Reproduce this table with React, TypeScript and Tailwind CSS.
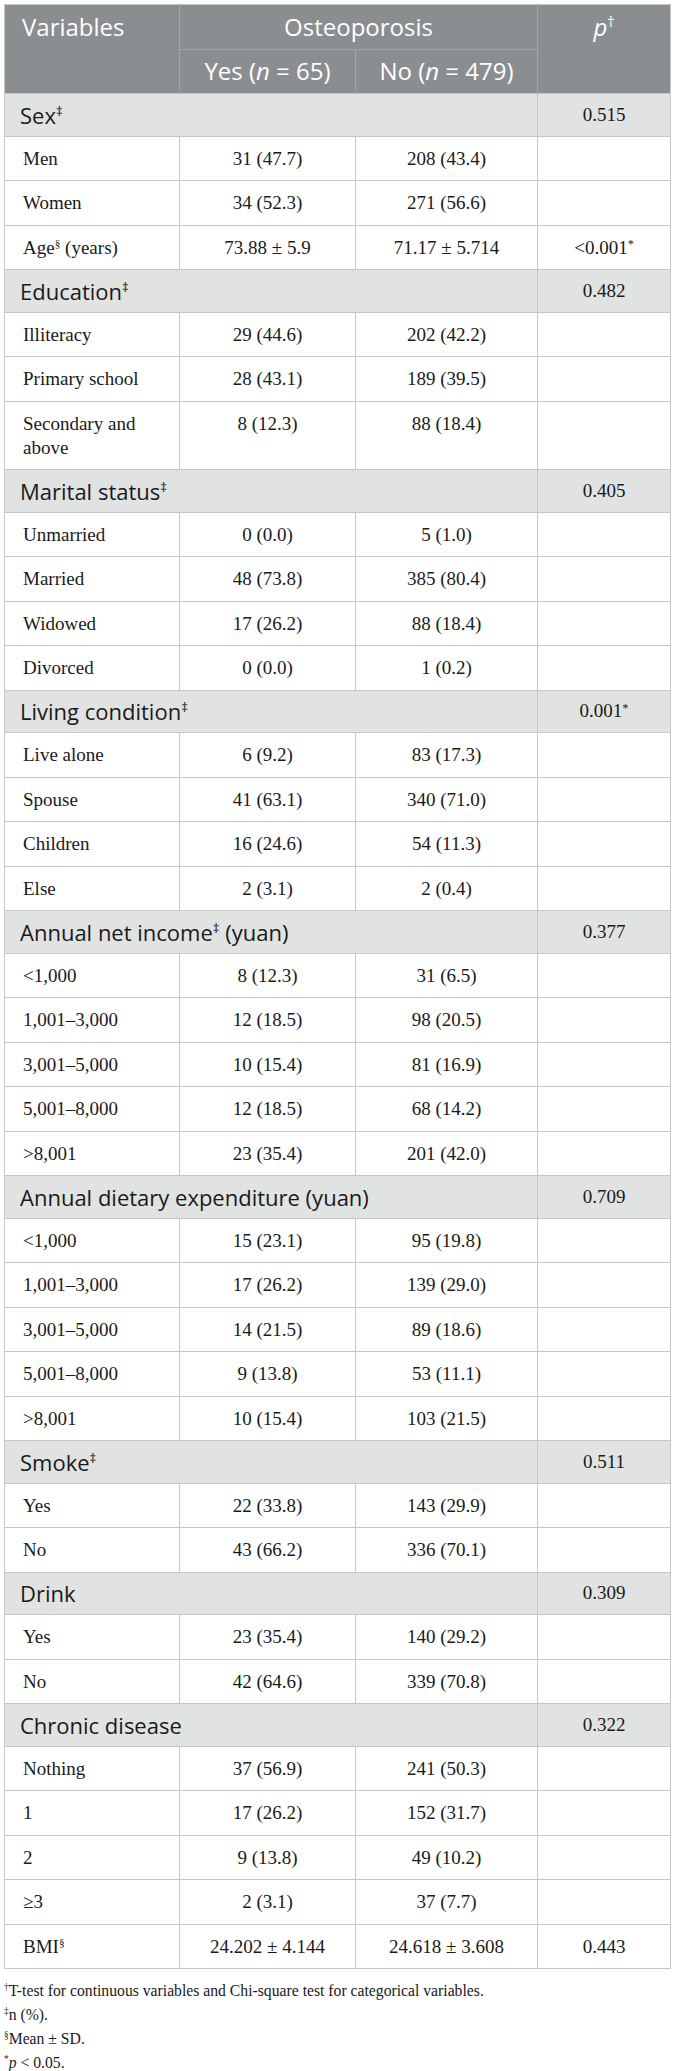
import React from 'react';

type Row =
  | { kind: 'group'; label: React.ReactNode; p: React.ReactNode }
  | { kind: 'data'; label: React.ReactNode; yes: string; no: string; p?: React.ReactNode };

const Sup = ({ children }: { children: React.ReactNode }) => (
  <sup className="text-[0.6em] relative -top-[0.6em] leading-[0] align-baseline">{children}</sup>
);

const Star = () => <sup className="text-[0.65em] relative -top-[0.45em] leading-[0] align-baseline">*</sup>;

const rows: Row[] = [
  { kind: 'group', label: <>Sex<Sup>‡</Sup></>, p: '0.515' },
  { kind: 'data', label: 'Men', yes: '31 (47.7)', no: '208 (43.4)' },
  { kind: 'data', label: 'Women', yes: '34 (52.3)', no: '271 (56.6)' },
  {
    kind: 'data',
    label: <>Age<Sup>§</Sup> (years)</>,
    yes: '73.88 ± 5.9',
    no: '71.17 ± 5.714',
    p: <>&lt;0.001<Star /></>,
  },
  { kind: 'group', label: <>Education<Sup>‡</Sup></>, p: '0.482' },
  { kind: 'data', label: 'Illiteracy', yes: '29 (44.6)', no: '202 (42.2)' },
  { kind: 'data', label: 'Primary school', yes: '28 (43.1)', no: '189 (39.5)' },
  { kind: 'data', label: 'Secondary and above', yes: '8 (12.3)', no: '88 (18.4)' },
  { kind: 'group', label: <>Marital status<Sup>‡</Sup></>, p: '0.405' },
  { kind: 'data', label: 'Unmarried', yes: '0 (0.0)', no: '5 (1.0)' },
  { kind: 'data', label: 'Married', yes: '48 (73.8)', no: '385 (80.4)' },
  { kind: 'data', label: 'Widowed', yes: '17 (26.2)', no: '88 (18.4)' },
  { kind: 'data', label: 'Divorced', yes: '0 (0.0)', no: '1 (0.2)' },
  { kind: 'group', label: <>Living condition<Sup>‡</Sup></>, p: <>0.001<Star /></> },
  { kind: 'data', label: 'Live alone', yes: '6 (9.2)', no: '83 (17.3)' },
  { kind: 'data', label: 'Spouse', yes: '41 (63.1)', no: '340 (71.0)' },
  { kind: 'data', label: 'Children', yes: '16 (24.6)', no: '54 (11.3)' },
  { kind: 'data', label: 'Else', yes: '2 (3.1)', no: '2 (0.4)' },
  { kind: 'group', label: <>Annual net income<Sup>‡</Sup> (yuan)</>, p: '0.377' },
  { kind: 'data', label: '<1,000', yes: '8 (12.3)', no: '31 (6.5)' },
  { kind: 'data', label: '1,001–3,000', yes: '12 (18.5)', no: '98 (20.5)' },
  { kind: 'data', label: '3,001–5,000', yes: '10 (15.4)', no: '81 (16.9)' },
  { kind: 'data', label: '5,001–8,000', yes: '12 (18.5)', no: '68 (14.2)' },
  { kind: 'data', label: '>8,001', yes: '23 (35.4)', no: '201 (42.0)' },
  { kind: 'group', label: 'Annual dietary expenditure (yuan)', p: '0.709' },
  { kind: 'data', label: '<1,000', yes: '15 (23.1)', no: '95 (19.8)' },
  { kind: 'data', label: '1,001–3,000', yes: '17 (26.2)', no: '139 (29.0)' },
  { kind: 'data', label: '3,001–5,000', yes: '14 (21.5)', no: '89 (18.6)' },
  { kind: 'data', label: '5,001–8,000', yes: '9 (13.8)', no: '53 (11.1)' },
  { kind: 'data', label: '>8,001', yes: '10 (15.4)', no: '103 (21.5)' },
  { kind: 'group', label: <>Smoke<Sup>‡</Sup></>, p: '0.511' },
  { kind: 'data', label: 'Yes', yes: '22 (33.8)', no: '143 (29.9)' },
  { kind: 'data', label: 'No', yes: '43 (66.2)', no: '336 (70.1)' },
  { kind: 'group', label: 'Drink', p: '0.309' },
  { kind: 'data', label: 'Yes', yes: '23 (35.4)', no: '140 (29.2)' },
  { kind: 'data', label: 'No', yes: '42 (64.6)', no: '339 (70.8)' },
  { kind: 'group', label: 'Chronic disease', p: '0.322' },
  { kind: 'data', label: 'Nothing', yes: '37 (56.9)', no: '241 (50.3)' },
  { kind: 'data', label: '1', yes: '17 (26.2)', no: '152 (31.7)' },
  { kind: 'data', label: '2', yes: '9 (13.8)', no: '49 (10.2)' },
  { kind: 'data', label: '≥3', yes: '2 (3.1)', no: '37 (7.7)' },
  { kind: 'data', label: <>BMI<Sup>§</Sup></>, yes: '24.202 ± 4.144', no: '24.618 ± 3.608', p: '0.443' },
];

const serif = "font-['Liberation_Serif','Times_New_Roman',serif]";
const sans = "font-['Open_Sans','Noto_Sans',sans-serif]";

export default function App() {
  return (
    <div className="bg-white w-[673px] min-h-[2071px] pt-[4px] pl-[4px] text-[#1a1a1a]">
      <table className="table-fixed border-collapse w-[667px] border border-[#c6c8c8]">
        <colgroup>
          <col className="w-[175px]" />
          <col className="w-[176px]" />
          <col className="w-[182px]" />
          <col />
        </colgroup>
        <thead className={`${sans} text-white bg-[#8b8e90] text-[24px] leading-[30px]`}>
          <tr>
            <th rowSpan={2} className="align-top text-left font-normal pl-[17px] pt-[7px] border-r border-[#a4a7a9]">
              Variables
            </th>
            <th colSpan={2} className="font-normal pt-[7px] pb-[7px] border-b border-[#a4a7a9]">
              Osteoporosis
            </th>
            <th rowSpan={2} className="align-top font-normal pt-[7px] border-l border-[#a4a7a9]">
              <i>p</i>
              <Sup>†</Sup>
            </th>
          </tr>
          <tr>
            <th className="font-normal pt-[6px] pb-[7px] border-r border-[#a4a7a9]">
              Yes (<i>n</i> = 65)
            </th>
            <th className="font-normal pt-[6px] pb-[7px]">
              No (<i>n</i> = 479)
            </th>
          </tr>
        </thead>
        <tbody>
          {rows.map((r, i) =>
            r.kind === 'group' ? (
              <tr key={i} className="bg-[#e1e2e2]">
                <td colSpan={3} className={`${sans} text-[22px] leading-[26px] pl-[15px] py-[7.75px] border border-[#c6c8c8]`}>
                  {r.label}
                </td>
                <td className={`${serif} text-[19px] leading-[26px] text-center py-[7.75px] border border-[#c6c8c8]`}>
                  {r.p}
                </td>
              </tr>
            ) : (
              <tr key={i} className={`${serif} text-[19px] leading-[24px]`}>
                <td className="align-top pl-[18px] pr-[18px] pt-[10px] pb-[9.5px] border border-[#c6c8c8]">{r.label}</td>
                <td className="align-top text-center pt-[10px] pb-[9.5px] border border-[#c6c8c8]">{r.yes}</td>
                <td className="align-top text-center pt-[10px] pb-[9.5px] border border-[#c6c8c8]">{r.no}</td>
                <td className="align-top text-center pt-[10px] pb-[9.5px] border border-[#c6c8c8]">{r.p}</td>
              </tr>
            )
          )}
        </tbody>
      </table>
      <div className={`${serif} text-[15.7px] leading-[24px] mt-[10px]`}>
        <p>
          <Sup>†</Sup>T-test for continuous variables and Chi-square test for categorical variables.
        </p>
        <p>
          <Sup>‡</Sup>n (%).
        </p>
        <p>
          <Sup>§</Sup>Mean ± SD.
        </p>
        <p>
          <Sup>*</Sup>
          <i>p</i> &lt; 0.05.
        </p>
      </div>
    </div>
  );
}
